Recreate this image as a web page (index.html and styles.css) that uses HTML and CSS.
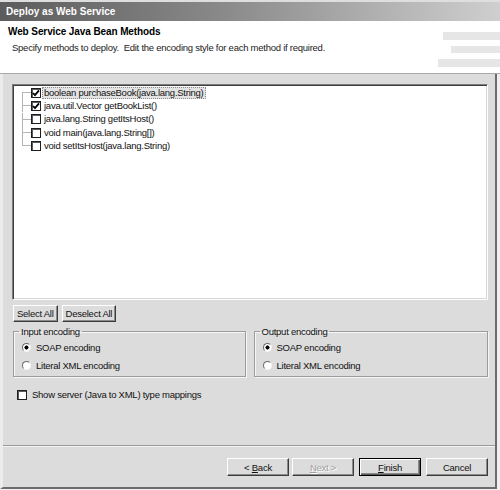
FILE: index.html
```html
<!DOCTYPE html>
<html>
<head>
<link rel="stylesheet" href="styles.css">
</head>
<body>
<div class="window">
  <div class="titlebar">Deploy as Web Service</div>

  <div class="banner">
    <div class="banner-text">
      <h1>Web Service Java Bean Methods</h1>
      <p>Specify methods to deploy.&nbsp; Edit the encoding style for each method if required.</p>
    </div>
    <div class="banner-art">
      <span class="bar bar-a"></span>
      <span class="bar bar-b"></span>
      <span class="bar bar-c"></span>
    </div>
  </div>

  <div class="page">
    <div class="content">
      <div class="tree">
        <div class="row first">
          <span class="twig"></span>
          <span class="check on"><svg viewBox="0 0 8 8"><polyline points="1,4 3,6.2 7,1.4"/></svg></span>
          <span class="label selected">boolean purchaseBook(java.lang.String)</span>
        </div>
        <div class="row">
          <span class="twig"></span>
          <span class="check on"><svg viewBox="0 0 8 8"><polyline points="1,4 3,6.2 7,1.4"/></svg></span>
          <span class="label">java.util.Vector getBookList()</span>
        </div>
        <div class="row">
          <span class="twig"></span>
          <span class="check"></span>
          <span class="label">java.lang.String getItsHost()</span>
        </div>
        <div class="row">
          <span class="twig"></span>
          <span class="check"></span>
          <span class="label">void main(java.lang.String[])</span>
        </div>
        <div class="row last">
          <span class="twig"></span>
          <span class="check"></span>
          <span class="label">void setItsHost(java.lang.String)</span>
        </div>
      </div>

      <div class="tree-buttons">
        <button class="btn small">Select All</button>
        <button class="btn small">Deselect All</button>
      </div>

      <div class="groups">
        <fieldset class="group">
          <legend>Input encoding</legend>
          <div class="option"><span class="radio on"></span>SOAP encoding</div>
          <div class="option"><span class="radio"></span>Literal XML encoding</div>
        </fieldset>
        <fieldset class="group">
          <legend>Output encoding</legend>
          <div class="option"><span class="radio on"></span>SOAP encoding</div>
          <div class="option"><span class="radio"></span>Literal XML encoding</div>
        </fieldset>
      </div>

      <div class="mappings">
        <span class="check"></span>
        Show server (Java to XML) type mappings
      </div>
    </div>

    <div class="footer">
      <button class="btn">&lt; <u>B</u>ack</button>
      <button class="btn disabled"><u>N</u>ext &gt;</button>
      <button class="btn default"><u>F</u>inish</button>
      <button class="btn">Cancel</button>
    </div>
  </div>
</div>
</body>
</html>
```

FILE: styles.css
```css
/* classic windows 2000 style wizard dialog */
body {
    margin: 0;
    width: 500px;
    height: 490px;
    background: #efefef;
    font-family: 'Liberation Sans', Arial, sans-serif;
    font-size: 9.5px;
    letter-spacing: -0.25px;
    color: #111;
    overflow: hidden;
}
.window {
    width: 500px;
    height: 489px;
    display: flex;
    flex-direction: column;
}
.titlebar {
    height: 19px;
    border-top: 2px solid #dedede;
    background: linear-gradient(to right, #5c5c5c, #8a8a8a 45%, #cfcfcf);
    color: #fff;
    font-weight: bold;
    font-size: 10px;
    letter-spacing: 0;
    line-height: 19px;
    padding-left: 6px;
}
.banner {
    height: 52px;
    background: #fff;
    border-bottom: 1px solid #a9a9a9;
    display: flex;
    justify-content: space-between;
}
.banner-text h1 {
    margin: 5px 0 0 8px;
    font-size: 10px;
    letter-spacing: -0.1px;
    line-height: 12px;
    font-weight: bold;
    color: #000;
}
.banner-text p {
    margin: 4px 0 0 12px;
    line-height: 12px;
    color: #222;
}
.banner-art {
    display: flex;
    flex-direction: column;
    align-items: flex-end;
    padding-top: 11px;
    gap: 6px;
}
.bar {
    display: block;
    height: 8px;
    background: #e6e6e6;
}
.bar-a { width: 57px; }
.bar-b { width: 49px; height: 7px; }
.bar-c { width: 62px; }

/* main gray area */
.page {
    flex: 1;
    display: flex;
    flex-direction: column;
    background: #dcdcdc;
    border-left: 3px solid #ececec;
    border-right: 2px solid #6b6b6b;
    border-bottom: 2px solid #6b6b6b;
    margin-right: 3px;
}
.content {
    flex: 1;
    padding: 10px 7px 0 9px;
}
.tree {
    height: 216px;
    box-sizing: border-box;
    background: #fff;
    border: 1px solid;
    border-color: #7c7c7c #fff #fff #7c7c7c;
    box-shadow: inset 1px 1px 0 #3f3f3f, inset -1px -1px 0 #d6d6d6;
    padding: 1px 0 0 1px;
}
.row {
    height: 13.3px;
    display: flex;
    align-items: center;
}
.twig {
    width: 9px;
    height: 13px;
    margin-left: 8px;
    background:
        linear-gradient(#b4b4b4, #b4b4b4) left top / 1px 14px no-repeat,
        linear-gradient(#b4b4b4, #b4b4b4) left 6px / 9px 1px no-repeat;
}
.row.first .twig {
    background:
        linear-gradient(#b4b4b4, #b4b4b4) left 6px / 1px 8px no-repeat,
        linear-gradient(#b4b4b4, #b4b4b4) left 6px / 9px 1px no-repeat;
}
.row.last .twig {
    background:
        linear-gradient(#b4b4b4, #b4b4b4) left top / 1px 7px no-repeat,
        linear-gradient(#b4b4b4, #b4b4b4) left 6px / 9px 1px no-repeat;
}
.check {
    display: inline-block;
    flex: none;
    width: 10px;
    height: 10px;
    box-sizing: border-box;
    background: #fff;
    border: 1px solid #1e1e1e;
    box-shadow: inset 1px 1px 0 #5a5a5a;
}
.check svg {
    display: block;
    width: 8px;
    height: 8px;
    fill: none;
    stroke: #000;
    stroke-width: 1.8;
}
.label {
    margin-left: 1px;
    padding: 0 1px;
    line-height: 10px;
    border: 1px solid transparent;
    white-space: nowrap;
}
.label.selected {
    background: #e3e3e3;
    border: 1px dotted #8a8a8a;
}

.btn {
    font: inherit;
    letter-spacing: inherit;
    color: #111;
    background: #dcdcdc;
    border: 1px solid;
    border-color: #fff #3c3c3c #3c3c3c #fff;
    box-shadow: inset -1px -1px 0 #8a8a8a;
    padding: 0;
    height: 18px;
    width: 62px;
}
.tree-buttons {
    display: flex;
    gap: 4px;
    margin-top: 5px;
    margin-left: 1px;
}
.btn.small {
    width: auto;
    height: 17px;
    padding: 0 3px;
}

.groups {
    display: flex;
    gap: 8px;
    margin-top: 4px;
    margin-left: 1px;
}
.group {
    margin: 0;
    height: 51px;
    box-sizing: border-box;
    padding: 2px 0 0 7px;
    border: 1px solid #9c9c9c;
    box-shadow: 1px 1px 0 #f6f6f6, inset 1px 1px 0 #f6f6f6;
}
.group:first-child { width: 233px; }
.group:last-child { width: 235px; }
.group legend {
    padding: 0 2px;
    margin-left: -2px;
    line-height: 11px;
}
.option {
    height: 17.5px;
    display: flex;
    align-items: center;
    gap: 5px;
    padding-left: 1px;
}
.radio {
    width: 9px;
    height: 9px;
    box-sizing: border-box;
    border-radius: 50%;
    border: 1px solid;
    border-color: #6a6a6a #f4f4f4 #f4f4f4 #6a6a6a;
    background: #fff;
}
.radio.on {
    background: radial-gradient(circle, #000 0 1.8px, #fff 2.3px);
}

.mappings {
    display: flex;
    align-items: center;
    gap: 5px;
    margin: 12px 0 0 5px;
}

.footer {
    height: 42px;
    border-top: 1px solid #9a9a9a;
    box-shadow: inset 0 1px 0 #f4f4f4;
    display: flex;
    justify-content: flex-end;
    align-items: flex-start;
    padding: 12px 7px 0 0;
    box-sizing: border-box;
}
.footer .btn { margin-left: 3px; }
.footer .btn.default { margin-left: 5px; }
.footer .btn:last-child { margin-left: 5px; }
.btn.disabled {
    color: #a2a2a2;
    text-shadow: 1px 1px 0 #fff;
}
.btn.default {
    border-color: #000;
    box-shadow: inset 1px 1px 0 #fff, inset -1px -1px 0 #5a5a5a, inset -2px -2px 0 #8a8a8a;
}
```
